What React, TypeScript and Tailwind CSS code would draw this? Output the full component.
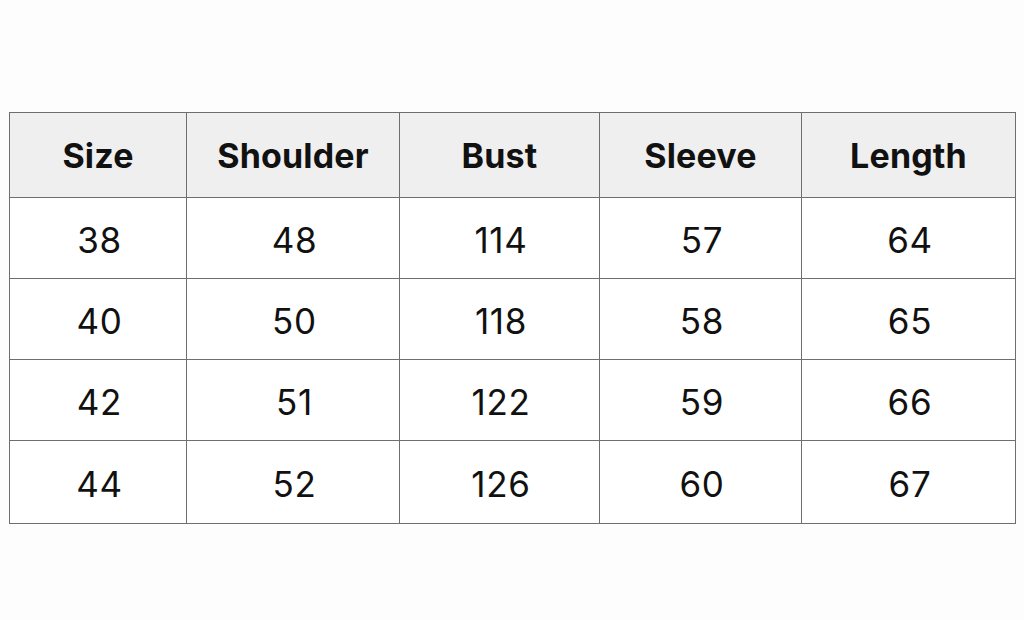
import React from "react";

const headers = ["Size", "Shoulder", "Bust", "Sleeve", "Length"];
const widths = ["w-[177px]", "w-[213px]", "w-[200px]", "w-[202px]", "w-[214px]"];
const rows = [
  ["38", "48", "114", "57", "64"],
  ["40", "50", "118", "58", "65"],
  ["42", "51", "122", "59", "66"],
  ["44", "52", "126", "60", "67"],
];

export default function App() {
  return (
    <div className="w-[1024px] h-[620px] bg-[#fdfdfd] pt-[112px] pl-[9px] font-['Inter',sans-serif] text-[#111]">
      <table className="border-collapse table-fixed w-[1007px]">
        <thead>
          <tr className="h-[85px] bg-[#efefef]">
            {headers.map((h, i) => (
              <th
                key={h}
                className={`${widths[i]} border border-[#6e6e6e] text-[34px] font-bold tracking-[0.005em] text-center align-middle`}
              >
                {h}
              </th>
            ))}
          </tr>
        </thead>
        <tbody>
          {rows.map((r, ri) => (
            <tr key={ri} className={ri === rows.length - 1 ? "h-[83px]" : "h-[81px]"}>
              {r.map((c, ci) => (
                <td
                  key={ci}
                  className="border border-[#6e6e6e] bg-white text-[35px] tracking-[0.02em] text-center align-middle pt-[4px] pl-[3px]"
                >
                  {c}
                </td>
              ))}
            </tr>
          ))}
        </tbody>
      </table>
    </div>
  );
}
